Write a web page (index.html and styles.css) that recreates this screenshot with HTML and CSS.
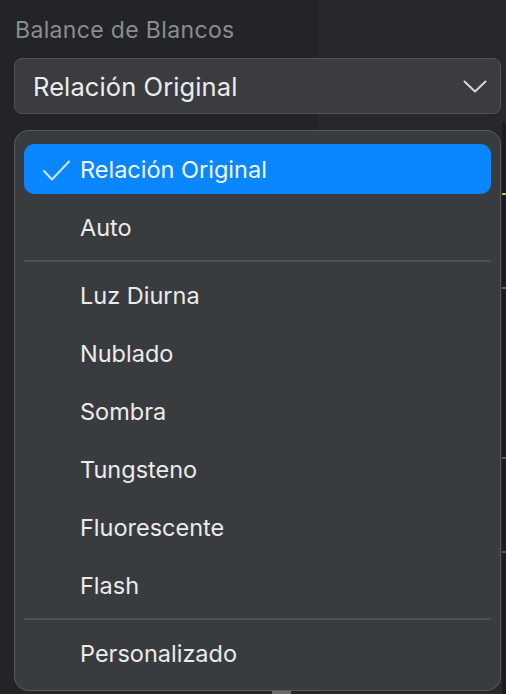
FILE: index.html
```html
<!DOCTYPE html>
<html lang="es">
<head>
<meta charset="utf-8">
<link rel="stylesheet" href="styles.css">
</head>
<body>
<div class="bg-right"></div>
<div class="bottom-tab"></div>
<div class="panel">
  <div class="label">Balance de Blancos</div>
  <div class="select">
    <span class="select-text">Relación Original</span>
    <svg class="chevron" width="24" height="14" viewBox="0 0 24 14"><polyline points="1.5,1.5 12,11.5 22.5,1.5" fill="none" stroke="#d6d7d8" stroke-width="2" stroke-linecap="round" stroke-linejoin="round"/></svg>
  </div>
  <div class="menu">
    <div class="item selected">
      <svg class="check" width="28" height="22" viewBox="0 0 28 22"><polyline points="2,11 10,19.5 27,1.5" fill="none" stroke="#cfe5ff" stroke-width="2" stroke-linecap="round" stroke-linejoin="round"/></svg>
      <span>Relación Original</span>
    </div>
    <div class="item"><span>Auto</span></div>
    <div class="sep"></div>
    <div class="item"><span>Luz Diurna</span></div>
    <div class="item"><span>Nublado</span></div>
    <div class="item"><span>Sombra</span></div>
    <div class="item"><span>Tungsteno</span></div>
    <div class="item"><span>Fluorescente</span></div>
    <div class="item"><span>Flash</span></div>
    <div class="sep"></div>
    <div class="item"><span>Personalizado</span></div>
  </div>
</div>
</body>
</html>
```

FILE: styles.css
```css
html, body {
  margin: 0;
  padding: 0;
  width: 506px;
  height: 694px;
  overflow: hidden;
}
body {
  background: linear-gradient(to right, #222427 0, #222427 318px, #26282b 318px);
  font-family: Inter, "Noto Sans", sans-serif;
  position: relative;
}
.bg-right {
  position: absolute;
  left: 502px;
  top: 122px;
  width: 4px;
  height: 572px;
  background:
    linear-gradient(#c9c24a, #c9c24a) 0 71px / 4px 2px no-repeat,
    linear-gradient(#8a4a8c, #8a4a8c) 0 165px / 4px 2px no-repeat,
    linear-gradient(#5a5c5e, #5a5c5e) 0 335px / 4px 2px no-repeat,
    linear-gradient(#5a5c5e, #5a5c5e) 0 429px / 4px 2px no-repeat,
    #1b1c1e;
}
.bottom-tab {
  position: absolute;
  left: 272px;
  top: 691px;
  width: 19px;
  height: 3px;
  background: #6a6b6d;
}
.panel {
  position: relative;
  padding: 15px 5px 0 14px;
}
.label {
  font-size: 23px;
  line-height: 30px;
  color: #8c8d8f;
  padding-left: 1px;
  letter-spacing: 0.35px;
}
.select {
  margin-top: 13px;
  height: 54px;
  border: 1px solid #515356;
  border-radius: 8px;
  background: #3a3c3f;
  display: flex;
  align-items: center;
  justify-content: space-between;
  padding: 0 13px 0 18px;
}
.select-text {
  font-size: 25.5px;
  color: #ececec;
  letter-spacing: 0.1px;
}
.chevron {
  display: block;
  margin-top: 1px;
}
.menu {
  margin-top: 16px;
  height: 561px;
  box-sizing: border-box;
  border: 1.5px solid #58595c;
  border-radius: 14px;
  background: #393c3f;
  padding: 13px 9px 0 9px;
  display: flex;
  flex-direction: column;
  gap: 8px;
}
.item {
  height: 50px;
  flex: none;
  border-radius: 10px;
  display: flex;
  align-items: center;
  padding-left: 56px;
  position: relative;
  font-size: 23.5px;
  color: #ebebec;
}
.item span {
  margin-top: 0;
}
.item.selected {
  background: #0a86ff;
  color: #f4f8ff;
}
.check {
  position: absolute;
  left: 18px;
  top: 16px;
}
.sep {
  height: 2px;
  flex: none;
  background: #4d5054;
}
```
